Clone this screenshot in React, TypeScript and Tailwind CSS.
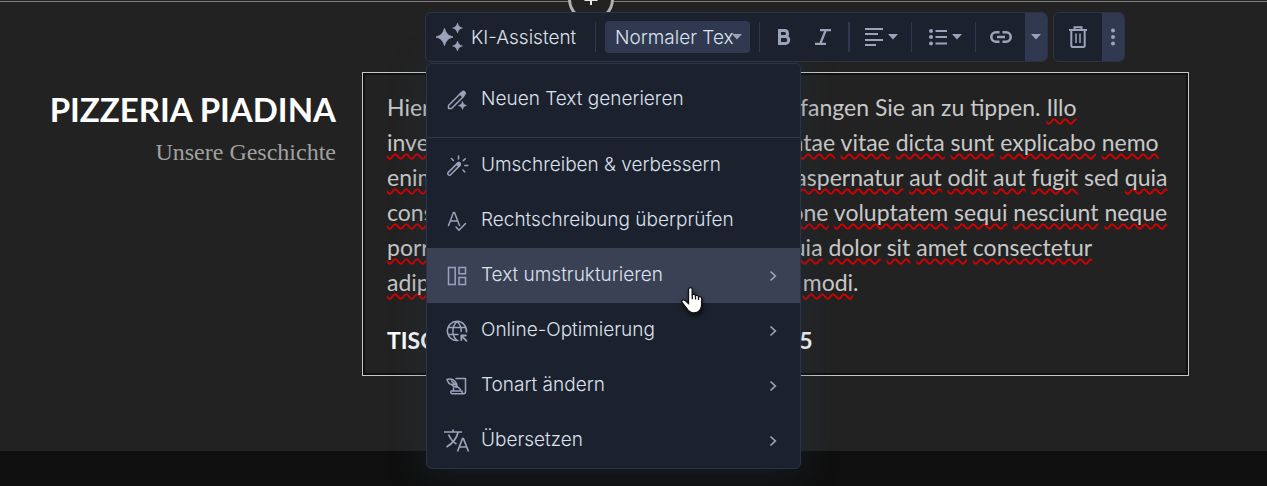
import type { ReactNode } from 'react';

const Caret = ({ className = '' }: { className?: string }) => (
  <svg viewBox="0 0 10 6" className={`h-[6px] w-[10px] shrink-0 ${className}`} fill="currentColor">
    <path d="M0 0h10L5 5.5z" />
  </svg>
);

const Divider = () => <span className="h-[30px] w-px shrink-0 bg-[#303850]" />;

const Icon = ({ children }: { children: ReactNode }) => (
  <svg
    viewBox="0 0 24 24"
    className="h-6 w-6 shrink-0"
    fill="none"
    stroke="currentColor"
    strokeWidth="1.5"
    strokeLinecap="round"
    strokeLinejoin="round"
  >
    {children}
  </svg>
);

const pencilIcon = (
  <Icon>
    <path d="M3.500 20.500v-3L15.500 5.500l3 3L6.500 20.500z" />
    <path d="M15 6l2-2c.8-.8 1.800-.8 2.600 0s.8 1.800 0 2.600l-2 2z" fill="currentColor" />
    <path d="M17.500 13.500l1.200 2.800 2.800 1.200-2.800 1.200-1.200 2.800-1.200-2.800-2.800-1.200 2.800-1.200z" fill="currentColor" strokeWidth="0.5" />
  </Icon>
);

const wandIcon = (
  <Icon>
    <path d="M3.300 18.400L12.600 9.100c.8-.8 1.700-.7 2.300 0s.7 1.500 0 2.300l-9.300 9.300c-.7.7-1.600.7-2.300 0s-.7-1.600 0-2.300z" />
    <path d="M11.500 10.200l1.200-1.100c.8-.7 1.600-.7 2.200 0s.6 1.500 0 2.200l-1.200 1.200z" fill="currentColor" />
    <path d="M13.500 2v3M6.500 4.500l1.800 1.900M20.300 4.700l-2 1.900M19.800 11.500h3M18 16l1.800 1.900" />
  </Icon>
);

const spellingIcon = (
  <Icon>
    <path d="M3.500 16.500L8.500 3.500h1l5 13M5.200 12h7.600" />
    <path d="M11 18l3 3.200 6.500-6.700" />
  </Icon>
);

const layoutIcon = (
  <Icon>
    <path d="M3.500 3.500h6.700v17H3.500zM14 3.500h6.500v6.300H14zM14 13.500h6.500v7H14z" strokeLinejoin="miter" />
  </Icon>
);

const globeIcon = (
  <Icon>
    <path d="M13 21.500A9.600 9.600 0 1 1 21.500 13M12 2.500c-5.500 5-5.500 14 0 19M12 2.500c3 2.700 4.300 6 4.200 10M3.500 8.500h17M3.500 15.500h9.500" />
    <path d="M21.500 21.800l-5-5M16.300 21v-4.500h4.500" strokeWidth="1.800" />
  </Icon>
);

const scrollIcon = (
  <Icon>
    <path d="M11 4.500h9.500v13c0 1.500-.8 2.200-2 2.200H7.500c-1.600 0-2-1.200-1.500-2.700h11v1.200c0 .8.500 1.500 1.500 1.500M8.500 14v3" />
    <path d="M2 5.500c3-.8 5.800-.5 7.600 1.500l2 2.700c.6 1.600.5 2.600-.3 3.600-1.800-.3-3.400-.9-4.500-2.800M2 5.500c.8 2.500 2.500 5 5 5l3.500-.7M6.500 7l9 8.500" />
  </Icon>
);

const translateIcon = (
  <svg viewBox="0 0 26 24" className="-ml-px h-6 w-[26px] shrink-0" fill="none" stroke="currentColor" strokeWidth="1.700">
    <path d="M0 3h18M9 .5V3M4.500 5.500c2 4.500 4.500 7.500 8 9.500M14 3.500c-1.500 6.500-5.500 11-11.500 14.500" />
    <path d="M13.500 22.500L18.500 9.500h.9L24.500 22.500M15 18h8" />
  </svg>
);

const items = [
  { label: 'Umschreiben & verbessern', icon: wandIcon },
  { label: 'Rechtschreibung überprüfen', icon: spellingIcon },
  { label: 'Text umstrukturieren', icon: layoutIcon, sub: true, active: true },
  { label: 'Online-Optimierung', icon: globeIcon, sub: true },
  { label: 'Tonart ändern', icon: scrollIcon, sub: true },
  { label: 'Übersetzen', icon: translateIcon, sub: true },
];

type ItemProps = { label: string; icon: ReactNode; sub?: boolean; active?: boolean };

function MenuItem({ label, icon, sub, active }: ItemProps) {
  return (
    <button
      type="button"
      role="menuitem"
      className={`flex h-[55px] w-full items-center pl-[18px] pr-[22px] text-left text-[#9aa3bb] ${active ? 'bg-[#3a4154]' : ''}`}
    >
      <span className="flex w-9 shrink-0">{icon}</span>
      <span className="flex-1 whitespace-nowrap text-[19px] font-light text-[#dce1ee]">{label}</span>
      {sub && (
        <svg viewBox="0 0 10 12" className="h-3 w-[10px]" fill="none" stroke="currentColor" strokeWidth="1.700">
          <path d="M2.500 1.500L7.300 6l-4.800 4.500" />
        </svg>
      )}
    </button>
  );
}

function Toolbar() {
  return (
    <div className="flex gap-[5px] text-[#9aa3bb]">
      <div className="flex h-[50px] items-center overflow-hidden rounded-md border border-[#2b3349] bg-[#1c222d]">
        <button type="button" className="flex w-[169px] items-center gap-2 pl-[10px]">
          <svg viewBox="0 0 27 28" className="h-7 w-[27px] shrink-0" fill="currentColor">
            <path d="M8.500 5.500c1.600 5.200 3.300 6.900 8.500 8.500-5.200 1.600-6.900 3.300-8.500 8.500C6.900 17.300 5.200 15.600 0 14c5.200-1.600 6.900-3.300 8.500-8.500z" stroke="currentColor" strokeLinejoin="round" />
            <path d="M21.500 0c1 3.200 1.800 4 5 5-3.200 1-4 1.800-5 5-1-3.200-1.800-4-5-5 3.200-1 4-1.800 5-5zM21.500 18c1 3.200 1.800 4 5 5-3.200 1-4 1.800-5 5-1-3.200-1.800-4-5-5 3.200-1 4-1.800 5-5z" stroke="currentColor" strokeWidth="0.600" />
          </svg>
          <span className="whitespace-nowrap pt-0.5 text-[19px] font-light text-[#dce1ee]">KI-Assistent</span>
        </button>
        <Divider />
        <div className="relative mx-[9px]">
          <select
            aria-label="Textformat"
            className="h-8 w-[145px] appearance-none overflow-hidden rounded-sm bg-[#303950] pl-[10px] pr-4 pt-0.5 text-[19px] font-light text-[#dce1ee]"
          >
            <option>Normaler Text</option>
          </select>
          <Caret className="pointer-events-none absolute right-2 top-[13px]" />
        </div>
        <Divider />
        <button type="button" aria-label="Fett" className="flex w-12 justify-center">
          <svg viewBox="0 0 14 16" className="h-4 w-[14px]" fill="none" stroke="currentColor" strokeWidth="3">
            <path d="M2.500 1.500h5c4 0 4 6 0 6h-5zM2.500 7.500h6c4.300 0 4.300 7 0 7h-6z" />
          </svg>
        </button>
        <button type="button" aria-label="Kursiv" className="flex w-10 justify-start pl-[7px]">
          <svg viewBox="0 0 16 16" className="h-4 w-4" fill="none" stroke="currentColor" strokeWidth="2.200">
            <path d="M5 1.100h11M0 14.900h11M10.800 1L5.200 15" />
          </svg>
        </button>
        <span className="h-[30px] w-0.5 shrink-0 bg-[#303850]" />
        <button type="button" aria-label="Ausrichtung" className="flex w-[61px] items-center gap-[5px] pl-[15px]">
          <svg viewBox="0 0 18 18" className="h-[18px] w-[18px]" stroke="currentColor" strokeWidth="2">
            <path d="M0 1h18M0 6h13M0 12h18M0 17h11" />
          </svg>
          <Caret />
        </button>
        <Divider />
        <button type="button" aria-label="Liste" className="flex w-[63px] items-center gap-[5px] pl-[17px]">
          <svg viewBox="0 0 18 18" className="h-[18px] w-[18px]" fill="currentColor">
            <circle cx="2" cy="3" r="2" />
            <circle cx="2" cy="9" r="2" />
            <circle cx="2" cy="15.500" r="2" />
            <path d="M6.500 2h11.500v2H6.500zM6.500 8h11.500v2H6.500zM6.500 14.500h11.500v2H6.500z" />
          </svg>
          <Caret />
        </button>
        <Divider />
        <button type="button" aria-label="Link" className="flex w-[49px] justify-center">
          <svg viewBox="0 0 22 12" className="h-3 w-[22px]" fill="none" stroke="currentColor" strokeWidth="2.600">
            <path d="M9.500 1.300H6a4.700 4.700 0 0 0 0 9.400h3.500M12.500 1.300H16a4.700 4.700 0 0 1 0 9.400h-3.500M7 6h8" />
          </svg>
        </button>
        <button type="button" aria-label="Mehr zum Link" className="flex h-full w-[22px] items-center justify-center bg-[#303950]">
          <Caret />
        </button>
      </div>
      <div className="flex h-[50px] items-center overflow-hidden rounded-md border border-[#2b3349] bg-[#1c222d]">
        <button type="button" aria-label="Löschen" className="flex w-12 justify-center">
          <svg viewBox="0 0 18 22" className="h-[22px] w-[18px]" fill="none" stroke="currentColor" strokeWidth="2">
            <path d="M0 4h18M5.500 3.500V1.200h7v2.300M2.300 4v15.500c0 1 .6 1.500 1.600 1.500h10.200c1 0 1.600-.6 1.600-1.500V4" />
            <path d="M7 7.500v9.500M11 7.500v9.500" strokeWidth="1.500" />
          </svg>
        </button>
        <button type="button" aria-label="Weitere Optionen" className="flex h-full w-[22px] items-center justify-center bg-[#303950]">
          <svg viewBox="0 0 4 18" className="h-[18px] w-1" fill="currentColor">
            <circle cx="2" cy="2.500" r="2" />
            <circle cx="2" cy="9" r="2" />
            <circle cx="2" cy="15.500" r="2" />
          </svg>
        </button>
      </div>
    </div>
  );
}

function Menu() {
  return (
    <div
      role="menu"
      className="ml-px mt-px w-[375px] rounded-md border border-[#2b3349] bg-[#1c222d] pt-2 shadow-[0_4px_36px_rgba(40,60,80,0.35)]"
    >
      <MenuItem label="Neuen Text generieren" icon={pencilIcon} />
      <div className="mt-[10px] border-t border-[#303850]">
        {items.map((item) => (
          <MenuItem key={item.label} {...item} />
        ))}
      </div>
    </div>
  );
}

// words the spell checker has marked
const Bad = ({ children }: { children: string }) => (
  <>
    {children.split(' ').map((word, i) => (
      <span key={i}>
        {i > 0 && ' '}
        <span className="underline decoration-[#d40000] decoration-wavy decoration-2 underline-offset-2 [text-decoration-skip-ink:none]">
          {word}
        </span>
      </span>
    ))}
  </>
);

function TextBox() {
  return (
    <div className="mr-[78px] min-w-0 flex-1 border border-[#c8c8c8] shadow-[inset_0_0_0_2px_#101010]">
      <div className="px-6 pb-[17px] pt-[17px] text-[23px] leading-[35px] text-[#c8c8c8]">
        <p className="whitespace-nowrap">
          Hier klicken, um Text hinzuzufügen, oder fangen Sie an zu tippen. <Bad>Illo</Bad>
          <br />
          <Bad>inventore veritatis et quasi architecto beatae vitae dicta sunt explicabo nemo</Bad>
          <br />
          <Bad>enim ipsam voluptatem quia voluptas sit aspernatur aut odit aut fugit</Bad> sed <Bad>quia</Bad>
          <br />
          <Bad>consequuntur magni dolores eos qui ratione voluptatem sequi nesciunt neque</Bad>
          <br />
          <Bad>porro quisquam est qui dolorem ipsum quia dolor sit amet consectetur</Bad>
          <br />
          <Bad>adipisci velit sed quia non numquam eius modi</Bad>.
        </p>
        <p className="mt-[23px] whitespace-nowrap font-bold text-white">TISCHRESERVIERUNG TEL. 0123-456 95</p>
      </div>
    </div>
  );
}

export default function App() {
  return (
    <div className="relative overflow-hidden bg-[#222222] font-['Lato',sans-serif]">
      <div className="h-[72px] pt-px">
        <div className="h-px w-full bg-[#808080]" />
      </div>
      <svg viewBox="0 0 48 48" className="absolute left-[567px] -top-[25px] h-12 w-12" fill="#222222" stroke="#b0b0b0" strokeWidth="3">
        <circle cx="24" cy="24" r="21.500" />
        <path d="M24 18v12M17.500 25h13" stroke="#e8e8e8" strokeWidth="2" />
      </svg>
      <main className="flex">
        <div className="w-[362px] shrink-0 pr-[26px] pt-[17px] text-right">
          <h1 className="text-[33px] font-bold leading-10 text-white">PIZZERIA PIADINA</h1>
          <p className="font-['Liberation_Serif',serif] text-2xl leading-[46px] text-[#a0a0a0]">Unsere Geschichte</p>
        </div>
        <TextBox />
      </main>
      <footer className="mt-[75px] h-[35px] bg-[#0f0f0f]" />
      <div className="absolute left-[425px] top-3 font-['Inter',sans-serif]">
        <Toolbar />
        <Menu />
      </div>
      <svg viewBox="0 0 22 27" className="absolute left-[681px] top-[287px] h-[27px] w-[22px] drop-shadow-[1px_3px_2px_rgba(0,0,0,0.6)]">
        <path
          d="M7.500 2.500c0-2.400 3.700-2.400 3.700 0v5c2-.7 3 .1 3.200 1 1.700-.5 2.900.1 3.100 1.200 2-.4 3.200.6 3.200 2.300v5c0 5-2.500 9-8 9-4 0-5.500-2-7.200-4.800L1 15.500c-1-1.800 1.300-3.600 3.200-1.900l3.300 3z"
          fill="#fff"
          stroke="#111"
          strokeWidth="1.300"
        />
        <path d="M11.300 7.500v4.800M14.500 8.500v4M17.500 9.800v3.200" stroke="#111" strokeWidth="1.300" />
      </svg>
    </div>
  );
}
